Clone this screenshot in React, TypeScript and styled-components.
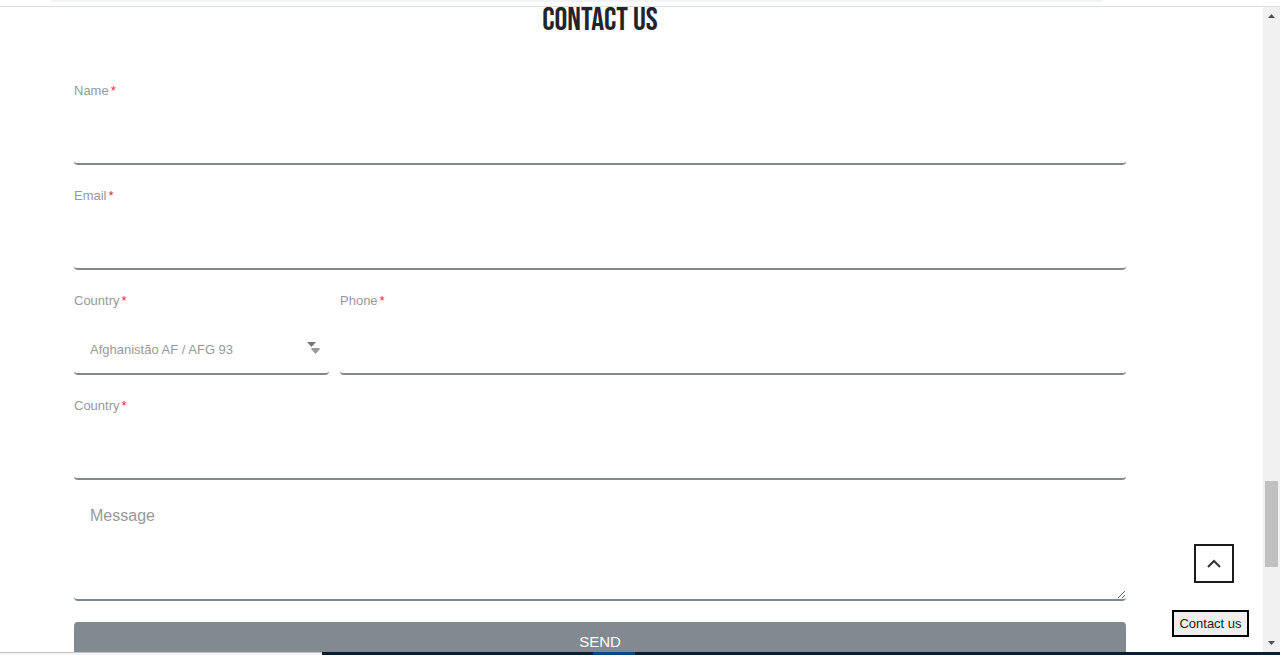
import React from "react";
import styled, { createGlobalStyle } from "styled-components";

const GlobalStyle = createGlobalStyle`
  * { box-sizing: border-box; }
  body {
    margin: 0;
    background: #fff;
    font-family: "Liberation Sans", Arial, sans-serif;
  }
  button, input, select, textarea { font: inherit; }
`;

const Window = styled.div`
  display: grid;
  grid-template-rows: 7px minmax(0, 1fr) 3px;
  height: 100vh;
  overflow: hidden;
`;

const Toolbar = styled.div`
  padding: 0 177px 0 51px;
  border-bottom: 1px solid #dcdddd;
`;

const AddressBar = styled.div`
  height: 2px;
  background: #f1f3f4;
  border-radius: 0 0 6px 6px;
`;

const Viewport = styled.div`
  position: relative;
  display: grid;
  grid-template-columns: minmax(0, 1fr) 17px;
  min-height: 0;
`;

const Page = styled.main`
  min-height: 0;
  padding: 0 137px 0 74px;
`;

const Title = styled.h2`
  margin: 0 0 46px;
  color: #212529;
  font-family: "Bebas Neue", "Liberation Sans Narrow", "Liberation Sans", sans-serif;
  font-size: 32px;
  font-weight: 400;
  line-height: 28px;
  text-align: center;
`;

const Form = styled.form`
  display: flex;
  flex-direction: column;
  gap: 21px;
`;

const PhoneRow = styled.div`
  display: grid;
  grid-template-columns: 255px minmax(0, 1fr);
  gap: 11px;
`;

const FieldBox = styled.div`
  display: flex;
  flex-direction: column;
  min-width: 0;
`;

const Label = styled.label`
  display: flex;
  gap: 2px;
  color: #999;
  font-size: 13px;
  line-height: 20px;
`;

const Required = styled.span`
  color: #f0283c;
`;

const Input = styled.input`
  width: 100%;
  height: 64px;
  padding: 0 16px;
  border: 0;
  border-bottom: 2px solid #7f8890;
  border-radius: 4px;
  background: transparent;
  color: #999;
  font-size: 13px;
  outline: 0;
`;

const SelectWrap = styled.div`
  position: relative;
`;

const Select = styled(Input).attrs({ as: "select" })`
  display: block;
  appearance: none;
  padding-top: 14px;
`;

const SelectArrows = styled.svg`
  position: absolute;
  right: 8px;
  top: 30px;
  pointer-events: none;
`;

const Message = styled.textarea`
  display: block;
  width: 100%;
  height: 100px;
  padding: 5px 16px;
  border: 0;
  border-bottom: 2px solid #7f8890;
  border-radius: 4px;
  background: transparent;
  font-size: 16px;
  line-height: 20px;
  resize: vertical;
  outline: 0;
  &::placeholder { color: #999; opacity: 1; }
`;

const Send = styled.button`
  flex: none;
  height: 38px;
  border: 0;
  border-radius: 4px;
  background: #828990;
  color: #fff;
  font-size: 15px;
`;

const ToTop = styled.button`
  position: absolute;
  right: 46px;
  bottom: 69px;
  display: grid;
  place-items: center;
  width: 40px;
  height: 39px;
  padding: 0;
  border: 2px solid #1c1c1f;
  background: #fff;
`;

const ContactButton = styled.button`
  position: absolute;
  right: 31px;
  bottom: 15px;
  width: 77px;
  height: 27px;
  padding: 0;
  border: 2px solid #000;
  background: #efefef;
  color: #222;
  font-size: 13px;
  white-space: nowrap;
`;

const ScrollTrack = styled.div`
  display: flex;
  flex-direction: column;
  align-items: center;
  background: #f1f1f1;
`;

const ScrollArrow = styled.svg`
  flex: none;
`;

const ScrollGap = styled.div<{ $share: number }>`
  flex: ${(p) => p.$share} 1 0;
`;

const ScrollThumb = styled.div`
  width: 13px;
  height: 86px;
  background: #c1c1c1;
`;

const Taskbar = styled.div`
  position: relative;
  z-index: 1;
  display: grid;
  grid-template-columns: 322px 271px 42px minmax(0, 1fr);
`;

const TaskSegment = styled.div<{ $color: string; $line?: string }>`
  background: ${(p) => p.$color};
  border-top: 1px solid ${(p) => p.$line ?? p.$color};
`;

function Field({ id, label, children }: { id: string; label: string; children: React.ReactNode }) {
  return (
    <FieldBox>
      <Label htmlFor={id}>
        {label} <Required>*</Required>
      </Label>
      {children}
    </FieldBox>
  );
}

export default function App() {
  return (
    <>
      <GlobalStyle />
      <Window>
        <Toolbar>
          <AddressBar />
        </Toolbar>
        <Viewport>
          <Page>
            <Title>CONTACT US</Title>
            <Form>
              <Field id="name" label="Name">
                <Input id="name" type="text" />
              </Field>
              <Field id="email" label="Email">
                <Input id="email" type="email" />
              </Field>
              <PhoneRow>
                <Field id="code" label="Country">
                  <SelectWrap>
                    <Select id="code">
                      <option>Afghanistão AF / AFG 93</option>
                    </Select>
                    <SelectArrows width="15" height="14" viewBox="0 0 15 14">
                      <path d="M1 1h9L5.500 6z" fill="#777" />
                      <path d="M5 8l1-1h7l1 1-4.500 5z" fill="#999" />
                    </SelectArrows>
                  </SelectWrap>
                </Field>
                <Field id="phone" label="Phone">
                  <Input id="phone" type="tel" />
                </Field>
              </PhoneRow>
              <Field id="country" label="Country">
                <Input id="country" type="text" />
              </Field>
              <Message aria-label="Message" placeholder="Message" />
              <Send type="button">SEND</Send>
            </Form>
          </Page>
          <ScrollTrack>
            <ScrollArrow width="17" height="17" viewBox="0 0 17 17">
              <path d="M5 11h7L8.500 7z" fill="#505050" />
            </ScrollArrow>
            <ScrollGap $share={457} />
            <ScrollThumb />
            <ScrollGap $share={68} />
            <ScrollArrow width="17" height="17" viewBox="0 0 17 17">
              <path d="M5 6h7L8.500 10z" fill="#505050" />
            </ScrollArrow>
          </ScrollTrack>
          <ToTop type="button" aria-label="Back to top">
            <svg width="14" height="9" viewBox="0 0 14 9" fill="none" stroke="#333" strokeWidth="2">
              <path d="M1 8l6-6 6 6" />
            </svg>
          </ToTop>
          <ContactButton type="button">Contact us</ContactButton>
        </Viewport>
        <Taskbar>
          <TaskSegment $color="#f3f5f7" $line="#bcc2c6" />
          <TaskSegment $color="#0a1e30" />
          <TaskSegment $color="#074a80" />
          <TaskSegment $color="#0a1e30" />
        </Taskbar>
      </Window>
    </>
  );
}
